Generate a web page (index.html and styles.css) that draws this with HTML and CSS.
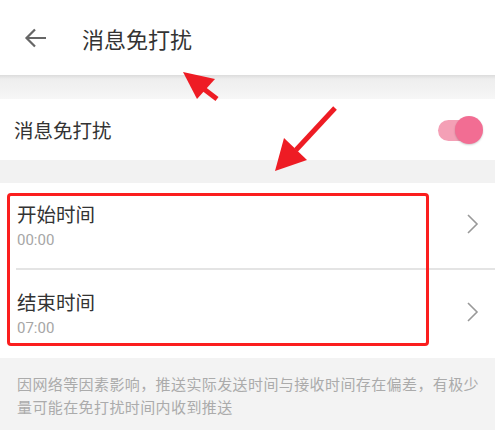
FILE: index.html
```html
<!DOCTYPE html>
<html>
<head>
  <meta charset="utf-8">
  <title>消息免打扰</title>
  <link rel="stylesheet" href="styles.css">
</head>
<body>
  <div class="page">
    <div class="header">
      <svg class="back" width="24" height="22" viewBox="0 0 24 22">
        <path d="M22 11H3M11 2.5L2.5 11l8.5 8.5" fill="none" stroke="#666" stroke-width="2.2"/>
      </svg>
      <span class="title">消息免打扰</span>
    </div>
    <div class="gap shadow"></div>

    <div class="row switch-row">
      <span class="label">消息免打扰</span>
      <span class="toggle"><span class="thumb"></span></span>
    </div>
    <div class="gap"></div>

    <div class="list">
      <div class="item">
        <div class="texts">
          <div class="label">开始时间</div>
          <div class="sub">00:00</div>
        </div>
        <svg class="chev" width="14" height="22" viewBox="0 0 14 22">
          <path d="M2 2l9 9-9 9" fill="none" stroke="#999" stroke-width="1.6"/>
        </svg>
      </div>
      <div class="item">
        <div class="texts">
          <div class="label">结束时间</div>
          <div class="sub">07:00</div>
        </div>
        <svg class="chev" width="14" height="22" viewBox="0 0 14 22">
          <path d="M2 2l9 9-9 9" fill="none" stroke="#999" stroke-width="1.6"/>
        </svg>
      </div>
    </div>

    <div class="note">因网络等因素影响，推送实际发送时间与接收时间存在偏差，有极少量可能在免打扰时间内收到推送</div>

    <!-- annotations -->
    <div class="mark"></div>
    <svg class="arrows" width="495" height="430" viewBox="0 0 495 430">
      <g fill="#ee1c24" stroke="#ee1c24">
        <path d="M217 99L196 83" stroke-width="5" fill="none"/>
        <path d="M183 72L215 79L197 99Z" stroke="none"/>
        <path d="M335 108L296 150" stroke-width="5" fill="none"/>
        <path d="M275 171L284 138L307 160Z" stroke="none"/>
      </g>
    </svg>
  </div>
</body>
</html>
```

FILE: styles.css
```css
* {
  box-sizing: border-box;
}

body {
  margin: 0;
  background: #f3f3f3;
  font-family: "Noto Sans CJK SC", "Noto Sans", sans-serif;
  color: #333;
}

.page {
  position: relative;
  width: 495px;
  height: 430px;
  overflow: hidden;
}

.header {
  height: 75px;
  background: #fff;
  display: flex;
  align-items: center;
  padding-left: 24px;
}

.back {
  margin-top: 1px;
}

.title {
  margin-left: 34px;
  font-size: 22px;
  color: #333;
}

.gap {
  height: 23px;
  background: #f2f2f2;
}

.shadow {
  height: 24px;
  background: linear-gradient(#dcdcdc, #eeeeee 4px, #f2f2f2 60%, #f7f7f7);
}

.row {
  background: #fff;
  height: 61px;
  display: flex;
  align-items: center;
  justify-content: space-between;
  padding: 0 13px 0 14px;
}

.label {
  font-size: 19.5px;
  color: #333;
  line-height: 26px;
}

.toggle {
  position: relative;
  width: 44px;
  height: 21px;
  border-radius: 11px;
  background: #f4a0b6;
  margin-top: 1px;
}

.thumb {
  position: absolute;
  right: -1px;
  top: -4px;
  width: 28px;
  height: 28px;
  border-radius: 50%;
  background: #f26d93;
  box-shadow: 0 1px 2px rgba(0, 0, 0, 0.2);
}

.list {
  background: #fff;
  padding-left: 16px;
}

.item {
  height: 87px;
  display: flex;
  align-items: center;
  justify-content: space-between;
  padding-left: 1px;
  padding-right: 15px;
  border-bottom: 2px solid #e4e4e4;
}

.item:last-child {
  border-bottom: none;
  height: 88px;
}

.texts {
  margin-top: 2px;
}

.sub {
  font-size: 15px;
  color: #a6a6a6;
  line-height: 26px;
  font-family: "Roboto", "Noto Sans", sans-serif;
}

.chev {
  margin-top: -4px;
}

.note {
  padding: 14px 12px 0 17px;
  font-size: 15px;
  line-height: 23px;
  letter-spacing: 0.4px;
  color: #ababab;
}

.mark {
  position: absolute;
  left: 7px;
  top: 193px;
  width: 422px;
  height: 153px;
  border: 3px solid #fb1e1e;
  border-radius: 4px;
}

.arrows {
  position: absolute;
  left: 0;
  top: 0;
}
```
